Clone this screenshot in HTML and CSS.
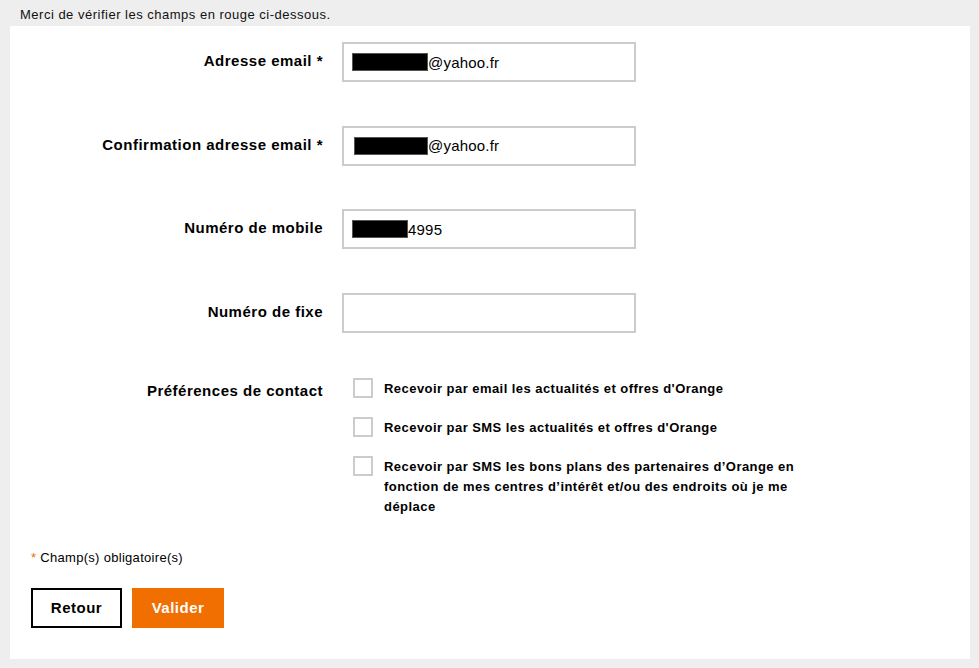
FILE: index.html
```html
<!DOCTYPE html>
<html lang="fr">
<head>
<meta charset="utf-8">
<title>Coordonnées</title>
<link rel="stylesheet" href="styles.css">
</head>
<body>
<p class="notice">Merci de vérifier les champs en rouge ci-dessous.</p>
<main class="panel">
  <form class="form">
    <div class="row">
      <label class="label">Adresse email *</label>
      <div class="field"><span class="redact r-email"></span>@yahoo.fr</div>
    </div>
    <div class="row">
      <label class="label">Confirmation adresse email *</label>
      <div class="field"><span class="redact r-email2"></span>@yahoo.fr</div>
    </div>
    <div class="row">
      <label class="label">Numéro de mobile</label>
      <div class="field"><span class="redact r-phone"></span>4995</div>
    </div>
    <div class="row">
      <label class="label">Numéro de fixe</label>
      <div class="field"></div>
    </div>
    <div class="row prefs">
      <span class="label">Préférences de contact</span>
      <div class="checks">
        <label class="check"><span class="box"></span><span class="ctext">Recevoir par email les actualités et offres d'Orange</span></label>
        <label class="check"><span class="box"></span><span class="ctext">Recevoir par SMS les actualités et offres d'Orange</span></label>
        <label class="check"><span class="box"></span><span class="ctext">Recevoir par SMS les bons plans des partenaires d’Orange en fonction de mes centres d’intérêt et/ou des endroits où je me déplace</span></label>
      </div>
    </div>
    <p class="required"><span class="star">*</span> Champ(s) obligatoire(s)</p>
    <div class="actions">
      <button type="button" class="btn btn-back">Retour</button>
      <button type="button" class="btn btn-submit">Valider</button>
    </div>
  </form>
</main>
</body>
</html>
```
FILE: styles.css
```css
* { box-sizing: border-box; }
html, body { margin: 0; padding: 0; }
body {
  background: #eeeeee;
  font-family: "Liberation Sans", Arial, Helvetica, sans-serif;
  color: #000;
  height: 668px;
  overflow: hidden;
}
.notice {
  margin: 0;
  padding: 7px 0 0 20px;
  height: 26px;
  font-size: 13px;
  line-height: 15px;
  letter-spacing: 0.5px;
  color: #111;
}
.panel {
  background: #fff;
  margin: 0 9px 0 10px;
  height: 633px;
  padding: 16px 0 0 0;
}
.form { display: flex; flex-direction: column; }
.row {
  display: grid;
  grid-template-columns: 313px 294px;
  column-gap: 19px;
  align-items: center;
  margin-bottom: 43.67px;
}
.label {
  text-align: right;
  font-weight: bold;
  font-size: 15px;
  line-height: 18px;
  letter-spacing: 0.5px;
  padding-bottom: 2px;
}
.field {
  height: 40px;
  border: 2px solid #cccccc;
  display: flex;
  align-items: center;
  padding-left: 8px;
  font-size: 15px;
  letter-spacing: 0.2px;
  color: #000;
}
.redact {
  display: inline-block;
  height: 18px;
  background: #000;
  border: 1px solid #555;
}
.r-email { width: 76px; }
.r-email2 { width: 74px; margin-left: 2px; }
.r-phone { width: 56px; }
.prefs {
  grid-template-columns: 313px 460px;
  align-items: start;
  margin-top: 1px;
  margin-bottom: 0;
}
.prefs .label { padding-top: 4px; }
.checks {
  display: flex;
  flex-direction: column;
  gap: 18px;
  padding-left: 11px;
}
.check {
  display: flex;
  align-items: flex-start;
  gap: 11px;
  font-weight: bold;
  font-size: 13px;
  line-height: 20px;
  letter-spacing: 0.45px;
}
.check .ctext { padding-top: 1px; }
.box {
  flex: none;
  width: 20px;
  height: 20px;
  border: 2px solid #cccccc;
  background: #fff;
}
.ctext { max-width: 430px; }
.required {
  margin: 33px 0 0 21px;
  font-size: 13px;
  line-height: 16px;
  letter-spacing: 0.3px;
}
.star { color: #f16e00; }
.actions {
  display: flex;
  gap: 10px;
  margin: 22px 0 0 21px;
}
.btn {
  height: 40px;
  font-family: inherit;
  font-weight: bold;
  font-size: 15px;
  letter-spacing: 0.5px;
  cursor: pointer;
  padding: 0;
}
.btn-back {
  width: 91px;
  background: #fff;
  border: 2px solid #000;
  color: #000;
}
.btn-submit {
  width: 92px;
  background: #f16e00;
  border: none;
  color: #fff;
}
```
